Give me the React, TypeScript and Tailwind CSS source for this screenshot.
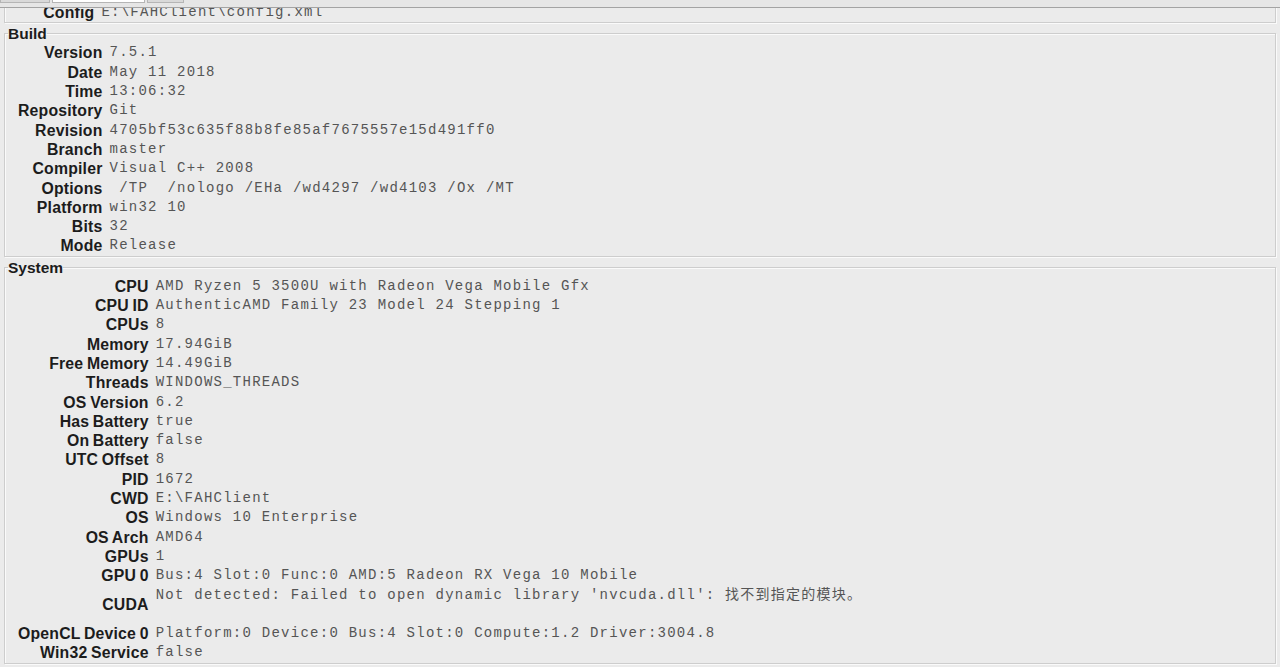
type Row = [string, string];

const client: Row[] = [
  ["Website", "https://foldingathome.org/"],
  ["Copyright", "(c) 2009-2018 foldingathome.org"],
  ["Author", "Joseph Coffland <joseph@cauldrondevelopment.com>"],
  ["Args", " "],
  ["Config", "E:\\FAHClient\\config.xml"],
];

const build: Row[] = [
  ["Version", "7.5.1"],
  ["Date", "May 11 2018"],
  ["Time", "13:06:32"],
  ["Repository", "Git"],
  ["Revision", "4705bf53c635f88b8fe85af7675557e15d491ff0"],
  ["Branch", "master"],
  ["Compiler", "Visual C++ 2008"],
  ["Options", " /TP  /nologo /EHa /wd4297 /wd4103 /Ox /MT"],
  ["Platform", "win32 10"],
  ["Bits", "32"],
  ["Mode", "Release"],
];

const system: Row[] = [
  ["CPU", "AMD Ryzen 5 3500U with Radeon Vega Mobile Gfx"],
  ["CPU ID", "AuthenticAMD Family 23 Model 24 Stepping 1"],
  ["CPUs", "8"],
  ["Memory", "17.94GiB"],
  ["Free Memory", "14.49GiB"],
  ["Threads", "WINDOWS_THREADS"],
  ["OS Version", "6.2"],
  ["Has Battery", "true"],
  ["On Battery", "false"],
  ["UTC Offset", "8"],
  ["PID", "1672"],
  ["CWD", "E:\\FAHClient"],
  ["OS", "Windows 10 Enterprise"],
  ["OS Arch", "AMD64"],
  ["GPUs", "1"],
  ["GPU 0", "Bus:4 Slot:0 Func:0 AMD:5 Radeon RX Vega 10 Mobile"],
  // the message ends with a newline, so the row takes two lines
  ["CUDA", "Not detected: Failed to open dynamic library 'nvcuda.dll': 找不到指定的模块。\n\u00a0"],
  ["OpenCL Device 0", "Platform:0 Device:0 Bus:4 Slot:0 Compute:1.2 Driver:3004.8"],
  ["Win32 Service", "false"],
];

// One titled group, drawn like a Swing etched TitledBorder
const Group = ({ title, rows }: { title: string; rows: Row[] }) => (
  <fieldset className="mx-1 border border-[#cdcdcd] shadow-[inset_1px_1px_0_#fafafa,1px_1px_0_#fafafa]">
    <legend className="ml-[3px] text-[15.5px] leading-[19px] font-bold text-[#1c1c1c]">{title}</legend>
    <div className="grid grid-cols-[auto_1fr] gap-x-[7px] pl-[13px]">
      {rows.map(([label, value]) => (
        <div key={label} className="contents">
          <div className="self-center text-right text-[15.8px] leading-[19.3px] font-bold tracking-[0.2px] [word-spacing:-1px] whitespace-nowrap text-[#1c1c1c]">
            {label}
          </div>
          <div className="self-start font-['Liberation_Mono','Noto_Sans_CJK_SC',monospace] text-[14px] leading-[19.3px] tracking-[1.25px] whitespace-pre text-[#555]">
            {value}
          </div>
        </div>
      ))}
    </div>
  </fieldset>
);

export default function App() {
  return (
    <div className="flex h-[667px] w-[1280px] flex-col overflow-hidden bg-[#ebebeb] font-['Liberation_Sans',Arial,sans-serif]">
      {/* Tab strip, mostly scrolled out of view */}
      <div className="h-[8px] shrink-0 overflow-hidden border-b border-[#a3a3a3] bg-[#e6e6e6]">
        <div className="-mt-[20px] flex items-end gap-[2px] text-[14px] text-[#222]">
          <div className="h-[23px] w-[50px] border border-[#b5b5b5] bg-[#d9d9d9] text-center leading-[23px]">Status</div>
          <div className="h-[23px] w-[93px] border border-[#b5b5b5] bg-white text-center leading-[23px]">System Info</div>
          <div className="h-[23px] w-[37px] border border-[#b5b5b5] bg-[#d9d9d9] text-center leading-[23px]">Log</div>
        </div>
      </div>

      {/* Scrolled info panel */}
      <div className="flex-1 overflow-hidden">
        <div className="-mt-[101px] flex flex-col gap-px">
          <Group title="Client" rows={client} />
          <Group title="Build" rows={build} />
          <Group title="System" rows={system} />
        </div>
      </div>
    </div>
  );
}
